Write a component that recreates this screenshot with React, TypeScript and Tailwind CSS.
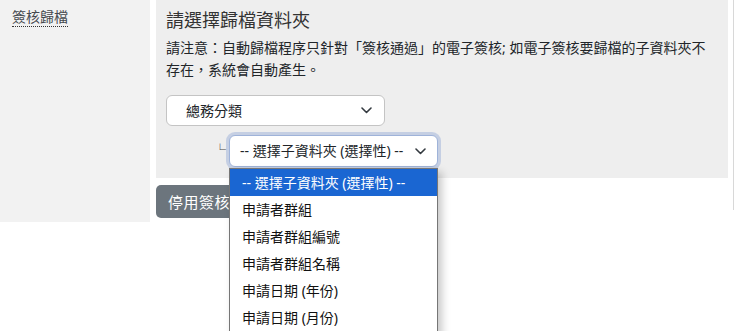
import React from "react";

const options = [
  "-- 選擇子資料夾 (選擇性) --",
  "申請者群組",
  "申請者群組編號",
  "申請者群組名稱",
  "申請日期 (年份)",
  "申請日期 (月份)",
];

function Chevron() {
  return (
    <svg width="11" height="7" viewBox="0 0 11 7" fill="none" className="shrink-0">
      <polyline points="1,1 5.5,5.5 10,1" stroke="#343a40" strokeWidth="1.6" strokeLinecap="round" strokeLinejoin="round" />
    </svg>
  );
}

export default function App() {
  return (
    <div className="relative w-[735px] h-[331px] overflow-hidden bg-white text-[#212529] font-['Noto_Sans','Noto_Sans_CJK_TC',sans-serif]">
      <div className="flex items-start">
        {/* label column */}
        <div className="w-[150px] h-[222px] bg-[#f2f2f2] pl-[12px] pt-[4px]">
          <span className="text-[14px] leading-[22px] text-[#45494f] border-b border-dotted border-[#333]">簽核歸檔</span>
        </div>

        {/* content column */}
        <div className="ml-[6px] w-[572px]">
          <div className="h-[178px] bg-[#eeeeee] px-[10px] pt-[6px]">
            <h3 className="text-[18px] leading-[28px] text-[#333]">請選擇歸檔資料夾</h3>
            <p className="mt-[3px] text-[14px] leading-[22px] whitespace-nowrap">
              請注意：自動歸檔程序只針對「簽核通過」的電子簽核; 如電子簽核要歸檔的子資料夾不
              <br />
              存在，系統會自動產生。
            </p>

            <div className="mt-[14px] flex h-[31px] w-[219px] items-center justify-between rounded-[6px] border border-[#c4c4c4] bg-white pl-[19px] pr-[12px]">
              <span className="text-[14px] leading-[20px]">總務分類</span>
              <Chevron />
            </div>

            <div className="mt-[9px] flex items-center">
              <span className="ml-[48px] w-[15px] text-[12px] leading-[16px] text-[#444]">└</span>
              <div className="relative">
                <div className="flex h-[32px] w-[209px] items-center justify-between rounded-[6px] border border-[#9fb3d9] bg-white pl-[10px] pr-[11px] shadow-[0_0_0_3px_rgba(120,148,205,0.35)]">
                  <span className="text-[14px] leading-[20px]">-- 選擇子資料夾 (選擇性) --</span>
                  <Chevron />
                </div>

                {/* open option list */}
                <ul className="absolute left-0 top-[33px] z-10 w-[209px] border border-[#767676] bg-white pb-[4px] shadow-[4px_4px_8px_rgba(0,0,0,0.22)]">
                  {options.map((o, i) => (
                    <li
                      key={o}
                      className={
                        i === 0
                          ? "h-[27px] pl-[12px] text-[14px] leading-[27px] bg-[#1a66d2] text-white"
                          : "h-[27px] pl-[12px] text-[14px] leading-[27px] text-[#111]"
                      }
                    >
                      {o}
                    </li>
                  ))}
                </ul>
              </div>
            </div>
          </div>

          <button className="mt-[7px] h-[33px] rounded-[5px] bg-[#6c757d] px-[12px] text-[15px] leading-[20px] tracking-[0.5px] text-white">
            停用簽核歸檔
          </button>
        </div>

        <div className="ml-[5px] h-[210px] w-px bg-[#d8d8d8]" />
      </div>
    </div>
  );
}
